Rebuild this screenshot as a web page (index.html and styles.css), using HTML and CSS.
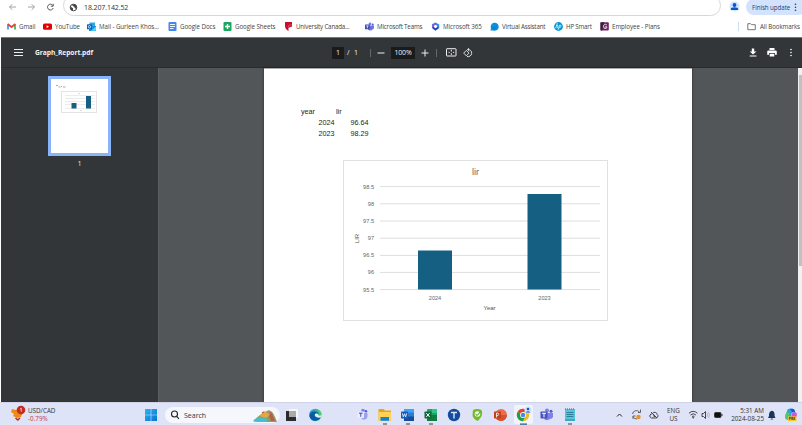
FILE: index.html
```html
<!DOCTYPE html>
<html lang="en">
<head>
<meta charset="utf-8">
<title>Graph_Report.pdf</title>
<link rel="stylesheet" href="styles.css">
</head>
<body>
<div class="screen">
  <header class="address-bar">
    <svg class="nav" width="63" height="15" fill="none" stroke="#999" stroke-width=".9"><path d="M16 7H9.500M12.300 4.200 9.500 7l2.800 2.800M28 7h6.500M31.700 4.200 34.500 7l-2.800 2.800"/><path d="M52.700 5.300A2.900 2.900 0 1 0 53.200 8M53.200 3.800v2.400h-2.400" stroke="#444"/></svg>
    <div class="omnibox">
      <svg width="9" height="9" viewBox="0 0 9 9"><circle cx="4.500" cy="4.500" r="3.300" fill="#fff" stroke="#444"/><path d="M1.500 3.500 4 5.200v2.500C2 7.500 1 6 1.500 3.500M3.500 1.500 6 1.300 7.500 3v2.500L6 5.500 5 3.600 3.500 3z" fill="#444"/></svg>
      <span class="url">18.207.142.52</span>
    </div>
    <svg class="avatar" width="11" height="11"><circle cx="5.500" cy="5.500" r="5" fill="#d3e3fd"/><circle cx="5.500" cy="4" r="1.900" fill="#0b57d0"/><path d="M1.800 9V8q0-1.800 3.700-1.800T9.200 8v1z" fill="#0b57d0"/></svg>
    <div class="update"><span>Finish update</span><svg width="3" height="9" fill="#333"><circle cx="1.500" cy="1.300" r=".8"/><circle cx="1.500" cy="4.300" r=".8"/><circle cx="1.500" cy="7.300" r=".8"/></svg></div>
  </header>
  <nav class="bookmarks">
    <a><svg viewBox="0 0 9 9"><path d="M1 7.500V2.400" stroke="#4285f4" stroke-width="1.600"/><path d="M8 7.500V2.400" stroke="#34a853" stroke-width="1.600"/><path d="m.6 2 3.900 3 3.900-3" stroke="#ea4335" stroke-width="1.800" fill="none"/></svg><span>Gmail</span></a>
    <a><svg viewBox="0 0 9 9"><rect y="1.500" width="9" height="6.300" rx="1.600" fill="#e60000"/><path d="m3.600 3.300 2.400 1.400-2.400 1.400z" fill="#fff"/></svg><span>YouTube</span></a>
    <a><svg viewBox="0 0 9 9"><path d="M2.500.5H8V5H2.500z" fill="#28a8ea"/><path d="M2 4 9 4v5H2z" fill="#1490df"/><path d="m9 4.500-5 4.300h5z" fill="#50d9ff"/><rect y="2.300" width="5" height="5" rx=".5" fill="#0364b8"/><circle cx="2.500" cy="4.800" r="1.200" fill="none" stroke="#fff" stroke-width=".7"/></svg><span>Mail - Gurleen Khos...</span></a>
    <a><svg viewBox="0 0 9 9"><rect x=".5" width="8" height="9" rx="1" fill="#4285f4"/><path d="M2 2.500h5M2 4.500h5M2 6.500h3.500" stroke="#fff" stroke-width=".9"/></svg><span>Google Docs</span></a>
    <a><svg viewBox="0 0 9 9"><rect x=".5" width="8" height="9" rx="1" fill="#18a860"/><path d="M2 4.500h5M4.500 2v5" stroke="#fff" stroke-width="1.400"/></svg><span>Google Sheets</span></a>
    <a><svg viewBox="0 0 9 9"><path d="M1 0h7v4.500L4.500 5.800V9Q1 7 1 4z" fill="#c8102e"/><path d="M4.500 5V3.500L8 2.500" stroke="#e76a77" stroke-width=".6" fill="none"/></svg><span class="tight">University Canada...</span></a>
    <a><svg viewBox="0 0 9 9"><circle cx="5" cy="1.900" r="1.400" fill="#7b83eb"/><circle cx="7.700" cy="2.400" r="1" fill="#5059c9"/><path d="M2.600 3.500H9V6q0 1-1.200 1.200Q7 8.500 5 8.500T2.600 6.500z" fill="#6b74e0"/><rect y="2.500" width="4.800" height="4.800" rx=".5" fill="#444bb5"/><path d="M1.200 3.900h2.400M2.400 3.900v2.400" stroke="#fff" stroke-width=".7"/></svg><span class="tight">Microsoft Teams</span></a>
    <a><svg viewBox="0 0 9 9" fill="none" stroke-width="2.100"><path d="M4.800 1.500 2 3v3" stroke="#7964d9"/><path d="m4 1.300 3.200 1.800v3" stroke="#3188e8"/><path d="m1.800 5.500 2.700 2 2.700-2" stroke="#2145c6"/></svg><span>Microsoft 365</span></a>
    <a><svg viewBox="0 0 9 9"><path d="M.5 8.500 1 6.300A4 4 0 1 1 3 8.400z" fill="#0791dc"/><path d="M2.800 5.500q1.700 1.700 3.400 0" stroke="#0570b8" fill="none"/></svg><span class="tight">Virtual Assistant</span></a>
    <a><svg viewBox="0 0 9 9"><circle cx="4.500" cy="4.500" r="4.400" fill="#0096d6"/><path d="M3.400.8 1.700 6.200M2.700 3.500q1.600-.7 1.200.6L3.200 6.200M5.600 3.200 4 8.200M5.600 3.200q1.800-.3 1.500.9-.4 1.800-2.100 1.700" stroke="#fff" stroke-width=".7" fill="none"/></svg><span class="tight">HP Smart</span></a>
    <a><svg viewBox="0 0 9 9"><rect x=".5" y=".3" width="8.300" height="8.300" rx="1" fill="#71235f"/><path d="M.5.3H4L2 8.600H.5z" fill="#36213b"/><path d="M6.800 2.800Q4 1.400 3.400 4.200 3.400 7 6.200 6.500L7 4.800H5" stroke="#fff" stroke-width=".8" fill="none"/></svg><span>Employee - Plans</span></a>
    <i class="sep"></i>
    <a><svg viewBox="0 0 9 9" fill="none" stroke="#555" stroke-width=".8"><path d="M.8 1.700h2.800l1 1h3.700v5H.8z"/></svg><span class="all">All Bookmarks</span></a>
  </nav>
  <section class="pdf-bar">
    <svg width="9" height="7" stroke="#eee" stroke-width="1"><path d="M0 .5h9M0 3.500h9M0 6.500h9"/></svg>
    <b class="filename">Graph_Report.pdf</b>
    <span class="field">1</span><span>/</span><span>1</span><i></i>
    <svg width="8" height="8" stroke="#eee"><path d="M.5 4h7"/></svg>
    <span class="field zoom">100%</span>
    <svg width="8" height="8" stroke="#eee"><path d="M.5 4h7M4 .5v7"/></svg><i></i>
    <svg width="11" height="9" fill="none" stroke="#eee"><rect x=".5" y=".7" width="9.500" height="7.300" rx=".5"/><path d="M5.300 1.800v1.700M5.300 5.200v1.700M2.500 4.400h1.200M6.900 4.400h1.200"/></svg>
    <svg width="11" height="10" fill="none" stroke="#eee" stroke-width=".9"><path d="m3.300 2.400 2.700 2.700-2.700 2.700L.7 5.100zM4.600 1.500a3.600 3.600 0 1 1-.6 7M6.200 0 4.600 1.500l1.600 1.500"/></svg>
    <svg width="9" height="9" fill="#fff"><path d="M2.800.5h2.400v3H7.500L4 6.500.8 3.500h2zM.7 7.400h6.800v1H.7z"/></svg>
    <svg width="11" height="9" fill="#fff"><path d="M2.500 0h5v2h-5zM1.400 2.500h7.200q1.200 0 1.200 1.200v3H8V5H2v1.700H.2v-3q0-1.200 1.200-1.200M2.700 5.700h4.600v2.800H2.700z"/></svg>
    <svg width="3" height="9" fill="#fff"><circle cx="1" cy="1.500" r=".8"/><circle cx="1" cy="4.500" r=".8"/><circle cx="1" cy="7.500" r=".8"/></svg>
  </section>
  <main class="viewer">
    <aside class="thumbs">
      <div class="thumb">
        <svg width="57" height="74" viewBox="51 79 57 74"><path d="M56 85.500h2M62 86.500h-1M58.500 87h2M63 87h2.500" stroke="#aaa"/><rect x="61.500" y="91.500" width="35" height="21" fill="#fff" stroke="#e3e3e3"/><path d="M65 95.500h30M65 98.500h30M65 101.500h30M65 104.500h30M65 108.500h30" stroke="#e7e7e7" stroke-width=".8"/><path d="M71.500 103h5v5.500h-5zM86 96h5v12.500h-5z" fill="#156082"/><path d="M78 93.500h2M80 110.500h2" stroke="#ddd"/></svg>
      </div>
      <span>1</span>
    </aside>
    <div class="canvas">
      <article class="page">
        <table class="data">
          <tr><td class="head">year</td><td class="head">lir</td></tr>
          <tr><td>2024</td><td>96.64</td></tr>
          <tr><td>2023</td><td>98.29</td></tr>
        </table>
        <svg class="chart" width="266" height="162" viewBox="343 160 266 162">
          <rect x="343.500" y="160.500" width="264" height="160" fill="#fff" stroke="#e0e0e0"/>
          <path d="M380 186.600h220M380 203.800h220M380 221h220M380 238.200h220M380 255.400h220M380 272.400h220M380 289.600h220" stroke="#dedede"/>
          <path d="M418 250.500h34v39h-34zM527.500 194h34v95.500h-34z" fill="#156082"/>
          <g class="ticks" text-anchor="end"><text x="374" y="188.600">98.5</text><text x="374" y="205.800">98</text><text x="374" y="223">97.5</text><text x="374" y="240.200">97</text><text x="374" y="257.400">96.5</text><text x="374" y="274.400">96</text><text x="374" y="291.600">95.5</text></g>
          <g class="ticks" text-anchor="middle"><text x="435" y="299.800">2024</text><text x="544.500" y="299.800">2023</text></g>
          <g class="axis" text-anchor="middle"><text x="489.500" y="310.300">Year</text><text transform="translate(359 238.500) rotate(-90)">LIR</text></g>
          <text class="title" x="475.500" y="175" text-anchor="middle">lir</text>
        </svg>
      </article>
      <div class="scroll"><i></i></div>
    </div>
  </main>
  <footer class="taskbar">
    <svg width="28" height="23" viewBox="0 402 28 23"><path d="m12 409 4 1 4-1 3 3-2 5-4 1-4-2 1-2-3-2z" fill="#ed8b16"/><path d="m15.500 418 2.300 2 2.200-2" stroke="#b92b22" stroke-width="1.500" fill="none"/><circle cx="21" cy="410" r="4.300" fill="#c42b1c"/><path d="m20.200 409 1-.9v3.500" stroke="#fff" stroke-width=".7" fill="none"/></svg>
    <div class="rate"><span>USD/CAD</span><span class="down">-0.79%</span></div>
    <svg width="20" height="23" viewBox="145 402 20 23"><defs><linearGradient id="w" x2="1" y2="1"><stop stop-color="#2bb5f4"/><stop offset="1" stop-color="#0871d2"/></linearGradient></defs><path d="M145 409h5.700v5.700H145zM151.300 409h5.700v5.700h-5.700zM145 415.300h5.700v5.700H145zM151.300 415.300h5.700v5.700h-5.700z" fill="url(#w)"/></svg>
    <div class="search">
      <svg width="10" height="10" fill="none" stroke="#222" stroke-width="1.100"><circle cx="4.500" cy="4" r="3"/><path d="m6.700 6.300 2.300 2.500"/></svg><span>Search</span>
      <svg width="26" height="15" viewBox="252 407 26 15"><path d="m254 419 6-5 5-3 4-2 4 3 2 4 2 5h-20z" fill="#8aa05d"/><path d="m259 415 6-5 5 4-4 3z" fill="#e5a73f"/><path d="m269 415 2-4 2 4 2 5h-4z" fill="#b65f51"/><path d="m262 412 2-1M270 411l2 1" stroke="#c8607a" stroke-width="1.500"/><path d="M253 420q5-4.500 9-3.500 3 0 6 2.500l-2 2h-9q-3 0-4-1" fill="#48bbd5"/></svg>
    </div>
    <svg width="28" height="23" viewBox="280 402 28 23"><path d="M289 409h9v9h-9z" fill="#f6f6f6"/><path d="M286 411h10v10h-10z" fill="#2b2b2b"/><path d="M289 411h7v6h-7z" fill="#aaa"/></svg>
    <svg width="48" height="23" viewBox="308 402 48 23"><defs><linearGradient id="e" x2="1"><stop stop-color="#1689d4"/><stop offset="1" stop-color="#58cf69"/></linearGradient></defs><circle cx="315.500" cy="415" r="6.200" fill="url(#e)"/><path d="M309.300 416q1-5 6-4.500 3 .2 3.400 3-2-2-4-.5c-1 2 2 5 6 3.500-3 4.500-10 4.500-11.400-1.500" fill="#0c59a4"/><path d="M315 414q-1 3.500 5.700 3.500l.8-2.500q-3 1.500-3.500-.5-1-1.500-3-.5" fill="#d9f6f4"/></svg>
    <svg width="20" height="23" viewBox="356 402 20 23"><circle cx="363" cy="410.500" r="1.800" fill="#7b83eb"/><circle cx="366" cy="411.300" r="1.200" fill="#5059c9"/><path d="M361 413h6.500v4q-1 2.800-3.500 2.800t-3-2.800z" fill="#9aa0ef"/><rect x="357.500" y="411.500" width="6.500" height="6.500" rx=".7" fill="#e9ebff"/><path d="M359 413.200h3.600M360.800 413.200v3.600" stroke="#444bb5"/></svg>
    <svg width="23" height="23" viewBox="376 402 23 23"><path d="M378.500 409h5l1.500 1.500h6v10h-12.500z" fill="#e8a51c"/><path d="M378.500 412h12.500v8.800h-12.500z" fill="#ffd257"/><path d="M380.500 417h8.500v3.800h-8.500z" fill="#1683cf"/><path d="M383 424h4" stroke="#777" stroke-width="1.500"/></svg>
    <svg width="23" height="23" viewBox="399 402 23 23"><rect x="404" y="409" width="10" height="12" rx="1" fill="#2b7cd3"/><path d="M404 409h10v3.500h-10z" fill="#41a5ee"/><path d="M404 416.500h10v4.500h-10z" fill="#124c9d"/><rect x="401" y="411.500" width="7" height="7" rx=".7" fill="#185abd"/><path d="m402.300 413.300 1 3.500 1.200-3 1.200 3 1-3.500" stroke="#fff" stroke-width=".8" fill="none"/><path d="M406 424h4" stroke="#777" stroke-width="1.500"/></svg>
    <svg width="24" height="23" viewBox="422 402 24 23"><rect x="427" y="409" width="10" height="12" rx="1" fill="#21a366"/><path d="M432 409h5v4h-5z" fill="#33c481"/><path d="M427 415h10v6h-10z" fill="#107c41"/><rect x="424.500" y="411.500" width="7" height="7" rx=".7" fill="#0b6a38"/><path d="m426.300 413.200 3.300 3.700m0-3.700-3.300 3.700" stroke="#fff"/><path d="M429 424h4" stroke="#777" stroke-width="1.500"/></svg>
    <svg width="24" height="23" viewBox="446 402 24 23"><circle cx="454" cy="415" r="6.200" fill="#154b9b"/><path d="M451 412.500h6M454 412.500v6" stroke="#dbe6f7" stroke-width="1.400"/></svg>
    <svg width="22" height="23" viewBox="470 402 22 23"><path d="M473 410q4-2 8.500 0 1.500 4-.5 7-1.500 2-3 4-5-2-5.500-6z" fill="#72bb22"/><circle cx="477.500" cy="414" r="2.800" fill="#eff9df"/><path d="m475.500 414 1.700 1.500 3-3.500" stroke="#368b25" fill="none"/></svg>
    <svg width="22" height="23" viewBox="492 402 22 23"><circle cx="501" cy="415" r="6" fill="#ed6c47"/><path d="M501 415h6a6 6 0 0 1-12 0z" fill="#d35230"/><rect x="494" y="411.500" width="7" height="7" rx=".7" fill="#c43e1c"/><path d="M496.500 417.500v-4.500h1.500q1.500 1.400 0 2.600h-1.500" stroke="#fff" stroke-width=".8" fill="none"/></svg>
    <svg width="24" height="23" viewBox="514 402 24 23"><rect x="514" y="405" width="19" height="19" rx="2" fill="#f1f3fd"/><circle cx="523" cy="415" r="6.200" fill="#eabd20"/><path d="M517.600 412a6.200 6.200 0 0 1 10.800 0H523v3z" fill="#e34133"/><path d="M517.600 412a6.200 6.200 0 0 0 5.200 9.200l2.600-4.700-2.400-1.500z" fill="#219b50"/><circle cx="523" cy="415" r="2.900" fill="#fff"/><circle cx="523" cy="415" r="2.200" fill="#4285f4"/><circle cx="528" cy="410" r="3.600" fill="#d3e3fd"/><circle cx="528" cy="409" r="1.300" fill="#0b57d0"/><path d="M525.600 412.400q2.400-2.500 4.800 0z" fill="#0b57d0"/><path d="M520 424.200h7" stroke="#4c7eaa" stroke-width="1.700"/></svg>
    <svg width="24" height="23" viewBox="538 402 24 23"><circle cx="547" cy="410.500" r="2" fill="#7b83eb"/><circle cx="551" cy="411.300" r="1.500" fill="#5059c9"/><path d="M545 413h8v4q-1 2-3 2-5 3-6-1z" fill="#7b83eb"/><rect x="540.500" y="411.500" width="7" height="7" rx=".7" fill="#4b53bc"/><path d="M542 413.300h4M544 413.300v4" stroke="#fff"/></svg>
    <svg width="52" height="23" viewBox="562 402 52 23"><rect x="565" y="409" width="10" height="12" fill="#56c5dc"/><path d="M566.500 412.500h7M566.500 414.500h7M566.500 416.500h7" stroke="#226f86" stroke-width=".8"/><path d="M565 409h10" stroke="#555" stroke-dasharray="1 1"/><path d="M565 420h10" stroke="#268ba2"/><path d="M568 424h4" stroke="#777" stroke-width="1.500"/></svg>
    <svg width="53" height="23" viewBox="614 402 53 23" fill="none" stroke="#222"><path d="m617 416.500 2.500-2.500 2.500 2.500"/><g stroke="#555" stroke-width=".9"><path d="M632.500 414a4 4 0 0 1 7-2M640.500 409.500v3H638M633 419v-3h2.500M633 416.500a4 4 0 0 0 4 2.500"/></g><circle cx="638.500" cy="417" r="2.200" fill="#f4911e" stroke="none"/><path d="M651.500 418q-2.500-1-1.500-3 1-1.500 2.500-1.300 1-2.200 3.200-1.200 1.500.7 1.500 2 1.500 1 .5 2.500-.4 1-2 1zM651 412l6 6M653 415.500l2 1.500" stroke="#444"/></svg>
    <div class="lang"><span>ENG</span><span>US</span></div>
    <svg width="41" height="23" viewBox="684 402 41 23" fill="none" stroke="#333" stroke-width=".9"><path d="M689 413.200q4.200-3.700 8.400 0M690.500 415q2.700-2.500 5.400 0M692 416.500q1.200-1 2.400 0"/><circle cx="693.200" cy="417.700" r=".5"/><path d="M702 413.500h1.500l2-2v7l-2-2H702z"/><path d="M707 413q1.300 2 0 4M708.500 412q1.800 3 0 6" stroke="#aaa" stroke-width=".7"/><rect x="714.500" y="412.500" width="6.500" height="5" rx="1" fill="#111" stroke="#333"/><path d="M722 414v2" stroke="#222"/></svg>
    <div class="clock"><span>5:31 AM</span><span>2024-08-25</span></div>
    <svg width="38" height="23" viewBox="764 402 38 23"><path d="M768 418q1.500-1.500 1-4 .5-3 2.800-3.300 2.600.3 2.700 3.300-.3 2.500 1 4z" fill="#17365f"/><path d="M770.800 419h2" stroke="#17365f"/><path d="M787.500 409.500q.8-.8 2-.8h3q1.700 0 2.200 1.800l.4 1.700h-3l-2.500 7.500h-1.800q-2.800 0-2.600-3z" fill="#2ba4d8"/><path d="M789.500 408.700h3q1.700 0 2.200 1.800l.4 1.700h-3q-.7-2.500-2.600-3.500" fill="#1b58cf"/><path d="M785.300 416.500q-.3-1.500 1.200-4.500l3.200 1-1.200 6.500q-2.900 0-3.200-3" fill="#57c46e"/><path d="M792.500 412.200h2.700q2.200.3 1.600 3l-1.600 4.300h-5z" fill="#c25bd6"/><path d="M793 416h3.500l-1.200 3.500h-3.500z" fill="#f0736a"/><rect x="788" y="416.500" width="8.500" height="4.500" fill="#ffc71c"/><text class="badge" x="788.800" y="420.100">PRE</text></svg>
  </footer>
</div>
</body>
</html>
```
FILE: styles.css
```css
* { box-sizing: border-box; }
body { margin: 0; background: #fff; font-family: "Open Sans", "Noto Sans", sans-serif; font-size: 6.5px; color: #444; }
svg { display: block; flex: none; }
.screen { width: 802px; height: 425px; display: flex; flex-direction: column; overflow: hidden; }
.address-bar { height: 16px; display: flex; align-items: flex-start; }
.omnibox { flex: none; width: 658px; height: 21px; margin-top: -5px; padding: 3px 0 0 5px; border: 1px solid #d7d7d7; border-radius: 11px; display: flex; align-items: center; gap: 6px; }
.url { font-size: 7px; letter-spacing: -.1px; color: #333; }
.avatar { margin: 1px 0 0 8px; }
.update { flex: none; width: 60px; height: 16px; margin: -1px 0 0 6px; padding: 0 7px 0 6px; border-radius: 8px; background: #d3e3fd; display: flex; align-items: center; gap: 4px; white-space: nowrap; font-size: 6.2px; letter-spacing: -.05px; color: #1d3e6c; }
.bookmarks { height: 21px; display: grid; grid-template-columns: 36px 44px 81px 55px 61px 81px 66px 59px 64px 46px 138px 9px 60px; padding-left: 7px; align-items: center; font-size: 6.2px; letter-spacing: -.06px; white-space: nowrap; }
.bookmarks a { display: flex; align-items: center; gap: 3px; }
.bookmarks svg { width: 9px; height: 9px; }
.tight { letter-spacing: -.18px; }
.all { margin-left: 1px; letter-spacing: -.1px; }
.sep { width: 1px; height: 9px; background: #c9dcfa; }
.pdf-bar { height: 31px; margin-left: 1px; padding-left: 13px; border-top: 1px solid #777; border-bottom: 1px solid #292c2f; background: #323639; color: #f1f1f1; display: grid; grid-template-columns: 21px 297px 15px 7px 16px 7px 14px 30px 15px 10px 17px 286px 18px 23px 10px; align-items: center; font-size: 7px; }
.pdf-bar i { width: 1px; height: 8px; background: #64676a; }
.filename { font-size: 6.7px; letter-spacing: -.06px; }
.field { height: 12px; line-height: 12px; background: #191b1c; text-align: center; justify-self: start; width: 12px; }
.zoom { width: 24px; letter-spacing: -.2px; }
.viewer { height: 334px; display: flex; margin-left: 1px; }
.thumbs { width: 158px; background: #323639; border-right: 1px solid #5c6063; padding-top: 8px; display: flex; flex-direction: column; align-items: center; color: #eee; }
.thumb { width: 63px; height: 80px; border: 3px solid #8ab4f8; background: #fff; }
.thumbs span { margin-top: 3px; }
.canvas { flex: 1; background: #525659; display: flex; justify-content: space-between; padding-left: 105px; }
.page { width: 428px; background: #fff; border-top: 1px solid #aaa; box-shadow: 0 0 2px #222; padding: 38px 0 0 36.5px; overflow: hidden; }
.data { border-collapse: collapse; table-layout: fixed; width: 68px; font: 7.200px/10.8px "Liberation Sans", sans-serif; color: #222; }
.data td { padding: 0; width: 34px; text-align: right; height: 10.8px; }
.data .head { text-align: left; padding-left: .5px; }
.data .head + .head { padding-left: 1.500px; }
.chart { margin: 20.6px 0 0 42.5px; font-family: "Liberation Sans", sans-serif; }
.ticks { font-size: 5.600px; fill: #666; }
.axis { font-size: 6px; fill: #555; }
.title { font-size: 9px; fill: #666; }
.scroll { width: 4px; background: #f1f1f1; padding: 7px 0 0 1px; }
.scroll i { display: block; height: 191px; background: #c1c1c1; }
.taskbar { height: 23px; display: flex; background: #dfe3f8; border-top: 1px solid #cfd3e5; color: #333; }
.taskbar > svg { margin-top: -1px; }
.rate, .lang, .clock { display: flex; flex-direction: column; font-size: 6.3px; line-height: 8.500px; padding-top: 3.5px; }
.rate { width: 117px; }
.down { color: #c43a37; }
.search { width: 115px; height: 16px; margin-top: 4px; padding: 0 2px 0 5px; border-radius: 8px; background: #f5f7fd; display: flex; align-items: center; font-size: 7px; }
.search span { margin-left: 4px; margin-right: auto; }
.lang { width: 17px; align-items: center; padding-right: 4px; }
.clock { width: 39px; align-items: flex-end; }
.badge { font: bold 3.500px "Open Sans", sans-serif; fill: #302620; }
```
